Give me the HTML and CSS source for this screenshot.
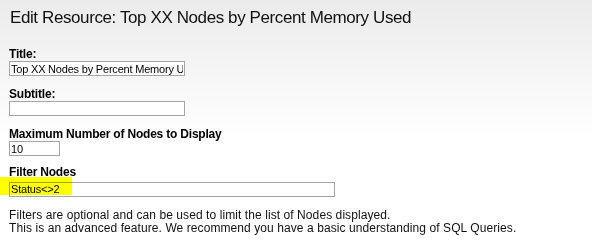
FILE: index.html
```html
<!DOCTYPE html>
<html>
<head>
<meta charset="utf-8">
<link rel="stylesheet" href="styles.css">
</head>
<body>
<div class="page">
  <h1 class="heading">Edit Resource: Top XX Nodes by Percent Memory Used</h1>
  <div class="field">
    <label class="label">Title:</label>
    <input class="input input-title" type="text" value="Top XX Nodes by Percent Memory Used">
  </div>
  <div class="field">
    <label class="label">Subtitle:</label>
    <input class="input input-title" type="text" value="">
  </div>
  <div class="field">
    <label class="label">Maximum Number of Nodes to Display</label>
    <input class="input input-num" type="text" value="10">
  </div>
  <div class="field field-filter">
    <label class="label">Filter Nodes</label>
    <div class="filter-wrap">
      <input class="input input-filter" type="text" value="Status&lt;&gt;2">
      <span class="highlight"></span>
    </div>
  </div>
  <p class="help">Filters are optional and can be used to limit the list of Nodes displayed.<br>This is an advanced feature. We recommend you have a basic understanding of SQL Queries.</p>
</div>
</body>
</html>
```
FILE: styles.css
```css
html, body {
  margin: 0;
  padding: 0;
}
body {
  font-family: "Liberation Sans", Arial, sans-serif;
  color: #000;
  background: linear-gradient(#ebebeb 0px, #fbfbfb 110px, #ffffff 140px);
  min-height: 249px;
}
.page {
  padding: 7px 0 0 9px;
  position: relative;
}
.heading {
  margin: 0 0 0 1px;
  font-size: 17px;
  letter-spacing: -0.4px;
  font-weight: normal;
  line-height: 21px;
  color: #111;
}
.field {
  display: flex;
  flex-direction: column;
  align-items: flex-start;
}
.field:first-of-type {
  margin-top: 19px;
}
.field + .field {
  margin-top: 11px;
}
.field-filter.field {
  margin-top: 9px;
}
.label {
  font-size: 12px;
  font-weight: bold;
  letter-spacing: -0.2px;
  line-height: 14px;
}
.input {
  box-sizing: border-box;
  height: 15px;
  border: 1px solid #a5a5a5;
  background: #fff;
  font-family: "Liberation Sans", Arial, sans-serif;
  font-size: 11px;
  letter-spacing: -0.2px;
  padding: 0 1px;
  margin: 0;
  color: #000;
  outline: none;
}
.input-title { width: 176px; }
.input-num { width: 51px; }
.input-filter { width: 326px; }
.filter-wrap {
  position: relative;
}
.highlight {
  position: absolute;
  left: -9px;
  top: -2px;
  width: 72px;
  height: 18px;
  background: #ffff00;
  mix-blend-mode: multiply;
}
.help {
  margin: 12px 0 0 0;
  font-size: 12px;
  letter-spacing: 0.08px;
  line-height: 13px;
  color: #111;
}
```
